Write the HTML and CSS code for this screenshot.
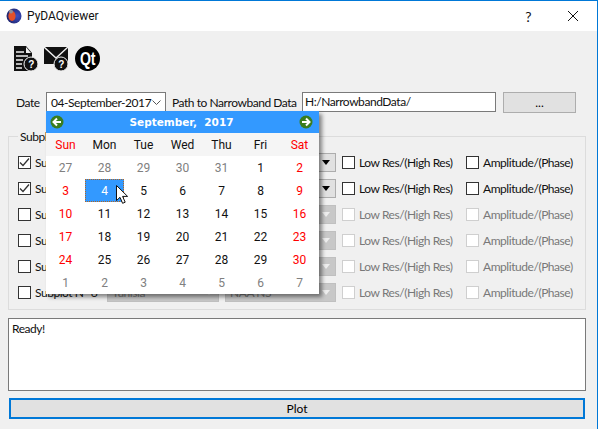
FILE: index.html
```html
<!DOCTYPE html>
<html lang="en">
<head>
    <meta charset="UTF-8">
    <meta name="viewport" content="width=device-width, initial-scale=1.0">
    <title>PyDAQviewer</title>
    <link rel="stylesheet" href="styles.css">
</head>
<body>
<div class="window">
    <header class="titlebar">
        <svg class="app-icon" width="16" height="16" viewBox="0 0 16 16">
            <defs>
                <radialGradient id="ballBlue" cx="0.7" cy="0.5" r="0.7">
                    <stop offset="0" stop-color="#3b4fc4"/>
                    <stop offset="1" stop-color="#20246a"/>
                </radialGradient>
            </defs>
            <circle cx="8" cy="8" r="7.5" fill="url(#ballBlue)"/>
            <ellipse cx="6" cy="8" rx="3.6" ry="5" fill="#e2502a"/>
            <circle cx="5" cy="3.5" r="2" fill="#8d8d9a"/>
        </svg>
        <span class="title">PyDAQviewer</span>
        <span class="help">?</span>
        <svg class="close" width="12" height="12" viewBox="0 0 12 12">
            <path d="M1 1l10 10M11 1L1 11" stroke="#111" stroke-width="1" fill="none"/>
        </svg>
    </header>

    <main class="content">
        <div class="toolbar">
            <svg class="tool" width="25" height="25" viewBox="0 0 25 25">
                <path d="M1 0h12l6 7v18H1z" fill="#111"/>
                <path d="M13 1l5 6h-5z" fill="#f0f0f0"/>
                <path d="M3 6h8M3 10h12M3 14h7M3 18h6M3 22h6" stroke="#f0f0f0" stroke-width="1.4"/>
                <circle cx="18" cy="18" r="7" fill="#111" stroke="#f0f0f0"/>
                <text x="18" y="22" class="badge-mark">?</text>
            </svg>
            <svg class="tool" width="25" height="25" viewBox="0 0 25 25">
                <path d="M0 1h24v17H0z" fill="#111"/>
                <path d="M0 1l12 11L24 1" fill="none" stroke="#f0f0f0" stroke-width="1.4"/>
                <circle cx="17" cy="18" r="7" fill="#111" stroke="#f0f0f0"/>
                <text x="17" y="22" class="badge-mark">?</text>
            </svg>
            <svg class="tool" width="25" height="25" viewBox="0 0 25 25">
                <circle cx="12.5" cy="12.5" r="12.5" fill="#000"/>
                <text x="12.5" y="18.5" class="qt-mark" textLength="15" lengthAdjust="spacingAndGlyphs">Qt</text>
            </svg>
        </div>

        <div class="path-row">
            <label class="date-label">Date</label>
            <div class="date-combo">
                <span>04-September-2017</span>
                <svg width="9" height="5" viewBox="0 0 9 5"><path d="M0.5 0.5l4 4 4-4" fill="none" stroke="#555"/></svg>
            </div>
            <label class="path-label">Path to Narrowband Data</label>
            <div class="path-input">H:/NarrowbandData/</div>
            <button class="browse">...</button>
        </div>

        <fieldset class="subplots">
            <legend>Subplots</legend>
            <div class="plot-row">
                <span class="check checked"><svg width="11" height="11" viewBox="0 0 11 11"><path d="M1 5.5l3 3 6-7" fill="none" stroke="#333" stroke-width="1.3"/></svg></span>
                <span class="plot-name">Subplot N° 1</span>
                <span class="combo"><i class="arrow"></i></span>
                <span class="combo second"><i class="arrow"></i></span>
                <span class="check"></span><span class="res">Low Res/(High Res)</span>
                <span class="check"></span><span class="amp">Amplitude/(Phase)</span>
            </div>
            <div class="plot-row">
                <span class="check checked"><svg width="11" height="11" viewBox="0 0 11 11"><path d="M1 5.5l3 3 6-7" fill="none" stroke="#333" stroke-width="1.3"/></svg></span>
                <span class="plot-name">Subplot N° 2</span>
                <span class="combo"><i class="arrow"></i></span>
                <span class="combo second"><i class="arrow"></i></span>
                <span class="check"></span><span class="res">Low Res/(High Res)</span>
                <span class="check"></span><span class="amp">Amplitude/(Phase)</span>
            </div>
            <div class="plot-row off">
                <span class="check main"></span>
                <span class="plot-name">Subplot N° 3</span>
                <span class="combo"><i class="arrow"></i></span>
                <span class="combo second"><i class="arrow"></i></span>
                <span class="check"></span><span class="res">Low Res/(High Res)</span>
                <span class="check"></span><span class="amp">Amplitude/(Phase)</span>
            </div>
            <div class="plot-row off">
                <span class="check main"></span>
                <span class="plot-name">Subplot N° 4</span>
                <span class="combo"><i class="arrow"></i></span>
                <span class="combo second"><i class="arrow"></i></span>
                <span class="check"></span><span class="res">Low Res/(High Res)</span>
                <span class="check"></span><span class="amp">Amplitude/(Phase)</span>
            </div>
            <div class="plot-row off">
                <span class="check main"></span>
                <span class="plot-name">Subplot N° 5</span>
                <span class="combo"><i class="arrow"></i></span>
                <span class="combo second"><i class="arrow"></i></span>
                <span class="check"></span><span class="res">Low Res/(High Res)</span>
                <span class="check"></span><span class="amp">Amplitude/(Phase)</span>
            </div>
            <div class="plot-row off">
                <span class="check main"></span>
                <span class="plot-name">Subplot N° 6</span>
                <span class="combo">Tunisia<i class="arrow"></i></span>
                <span class="combo second">NAA NS<i class="arrow"></i></span>
                <span class="check"></span><span class="res">Low Res/(High Res)</span>
                <span class="check"></span><span class="amp">Amplitude/(Phase)</span>
            </div>
        </fieldset>

        <div class="log">Ready!</div>
        <button class="plot">Plot</button>
    </main>

    <!-- popup calendar sits over the form -->
    <div class="calendar">
        <div class="cal-head">
            <svg width="14" height="14" viewBox="0 0 14 14"><circle cx="7" cy="7" r="6.5" fill="#3a7d1e"/><path d="M11 7H4M7 3.5L3.5 7 7 10.5" fill="none" stroke="#fff" stroke-width="2"/></svg>
            <span class="cal-title">September,&nbsp; 2017</span>
            <svg width="14" height="14" viewBox="0 0 14 14"><circle cx="7" cy="7" r="6.5" fill="#3a7d1e"/><path d="M3 7h7M7 3.5L10.5 7 7 10.5" fill="none" stroke="#fff" stroke-width="2"/></svg>
        </div>
        <div class="cal-days">
            <span class="red">Sun</span><span>Mon</span><span>Tue</span><span>Wed</span><span>Thu</span><span>Fri</span><span class="red">Sat</span>
        </div>
        <div class="cal-grid">
            <span class="other">27</span><span class="other">28</span><span class="other">29</span><span class="other">30</span><span class="other">31</span><span>1</span><span class="red">2</span>
            <span class="red">3</span><span class="selected">4</span><span>5</span><span>6</span><span>7</span><span>8</span><span class="red">9</span>
            <span class="red">10</span><span>11</span><span>12</span><span>13</span><span>14</span><span>15</span><span class="red">16</span>
            <span class="red">17</span><span>18</span><span>19</span><span>20</span><span>21</span><span>22</span><span class="red">23</span>
            <span class="red">24</span><span>25</span><span>26</span><span>27</span><span>28</span><span>29</span><span class="red">30</span>
            <span class="other">1</span><span class="other">2</span><span class="other">3</span><span class="other">4</span><span class="other">5</span><span class="other">6</span><span class="other">7</span>
        </div>
    </div>

    <svg class="cursor" width="13" height="20" viewBox="0 0 13 20">
        <path d="M0.5 0.5v15l3.5-3.2 2.6 6 2.6-1.1-2.6-5.8h5z" fill="#fff" stroke="#111"/>
    </svg>
</div>
</body>
</html>
```

FILE: styles.css
```css
html, body {
    margin: 0;
    height: 100%;
    overflow: hidden;
}
body {
    font-family: Lato, "Noto Sans", sans-serif;
    font-size: 12px;
    letter-spacing: -0.45px;
    color: #111;
    background-color: #f0f0f0;
}
.window {
    position: relative;
    width: 598px;
    height: 429px;
    box-sizing: border-box;
    border-top: 1px solid #0078d7;
    border-right: 1px solid #0078d7;
    white-space: nowrap;
}
.titlebar {
    display: flex;
    align-items: center;
    height: 30px;
    padding-left: 6px;
    background: #fff;
}
.title {
    margin-left: 5px;
    font-family: Roboto, sans-serif;
    font-size: 12px;
    letter-spacing: 0;
}
.help {
    margin-left: auto;
    font-size: 14px;
}
.close {
    margin: 0 18px 0 36px;
}
.content {
    padding: 15px 11px 0 8px;
}
.toolbar {
    display: flex;
    gap: 6px;
    padding-left: 5px;
}
.badge-mark {
    font-family: "Liberation Sans", sans-serif;
    font-size: 10px;
    font-weight: bold;
    fill: #fff;
    text-anchor: middle;
}
.qt-mark {
    font-family: "Liberation Sans", sans-serif;
    font-size: 18px;
    font-weight: bold;
    fill: #fff;
    text-anchor: middle;
}
.path-row {
    display: flex;
    align-items: center;
    height: 22px;
    margin-top: 20px;
}
.date-label {
    margin-left: 8px;
    width: 30px;
}
.date-combo {
    display: flex;
    align-items: center;
    justify-content: space-between;
    box-sizing: border-box;
    width: 120px;
    height: 20px;
    padding: 0 4px;
    background: #fff;
    border: 1px solid #7a7a7a;
}
.path-label {
    width: 130px;
    margin-left: 6px;
}
.path-input {
    box-sizing: border-box;
    width: 194px;
    height: 20px;
    padding-left: 2px;
    line-height: 18px;
    background: #fff;
    border: 1px solid #7a7a7a;
}
.browse {
    width: 73px;
    height: 21px;
    margin-left: 7px;
    padding: 0;
    font: inherit;
    background: #e1e1e1;
    border: 1px solid #adadad;
}
.subplots {
    box-sizing: border-box;
    height: 181px;
    margin: 16px 0 0;
    padding: 5px 0 0 9px;
    border: 1px solid #dcdcdc;
}
.subplots legend {
    margin-left: 0;
    padding: 0 2px;
}
.plot-row {
    display: flex;
    align-items: center;
    flex: none;
    height: 26px;
}
.check {
    display: flex;
    align-items: center;
    justify-content: center;
    box-sizing: border-box;
    flex: none;
    width: 13px;
    height: 13px;
    background: #fff;
    border: 1px solid #333;
}
.plot-name {
    width: 72px;
    margin-left: 4px;
}
.combo {
    position: relative;
    box-sizing: border-box;
    width: 112px;
    height: 19px;
    padding-left: 4px;
    line-height: 17px;
    background: #e1e1e1;
    border: 1px solid #adadad;
}
.combo.second {
    width: 111px;
    margin: 0 6px 0 6px;
}
.arrow {
    position: absolute;
    top: 6px;
    right: 5px;
    border: 4px solid transparent;
    border-top: 5px solid #000;
    border-bottom: 0;
}
.res {
    width: 107px;
    margin-left: 4px;
}
.amp {
    margin-left: 4px;
}
.off .res, .off .amp {
    color: #787878;
}
.off .check {
    border-color: #cfcfcf;
}
.off .check.main {
    border-color: #333;
}
.off .combo {
    color: #787878;
    background: #c8c8c8;
    border-color: #c0c0c0;
}
.off .arrow {
    border-top-color: #eee;
}
.log {
    box-sizing: border-box;
    height: 73px;
    margin-top: 8px;
    padding: 2px 3px;
    background: #fff;
    border: 1px solid #7a7a7a;
}
.plot {
    display: block;
    box-sizing: border-box;
    width: 576px;
    height: 21px;
    margin: 7px 0 0 1px;
    padding: 0;
    font: inherit;
    background: #e1e1e1;
    border: 2px solid #0078d7;
}
.calendar {
    position: absolute;
    left: 46px;
    top: 110px;
    width: 273px;
    font-family: Roboto, sans-serif;
    letter-spacing: 0;
    background: #fff;
    box-shadow: 3px 3px 4px rgba(0, 0, 0, 0.45);
}
.cal-head {
    display: flex;
    align-items: center;
    justify-content: space-between;
    height: 22px;
    padding: 0 6px 0 4px;
    background: #3399ff;
}
.cal-title {
    font-family: "DejaVu Sans", sans-serif;
    font-size: 10.5px;
    font-weight: bold;
    color: #fff;
}
.cal-days, .cal-grid {
    display: grid;
    grid-template-columns: repeat(7, 39px);
    justify-items: stretch;
    text-align: center;
    font-size: 12px;
}
.cal-days {
    height: 23px;
    line-height: 25px;
    background: #f5f5f5;
}
.cal-grid {
    grid-auto-rows: 23px;
    line-height: 25px;
}
.red {
    color: #ff0000;
}
.other {
    color: #808080;
}
.selected {
    box-sizing: border-box;
    line-height: 23px;
    color: #fff;
    background: #3399ff;
    border: 1px dotted #b5651d;
}
.cursor {
    position: absolute;
    left: 116px;
    top: 184px;
}
```
